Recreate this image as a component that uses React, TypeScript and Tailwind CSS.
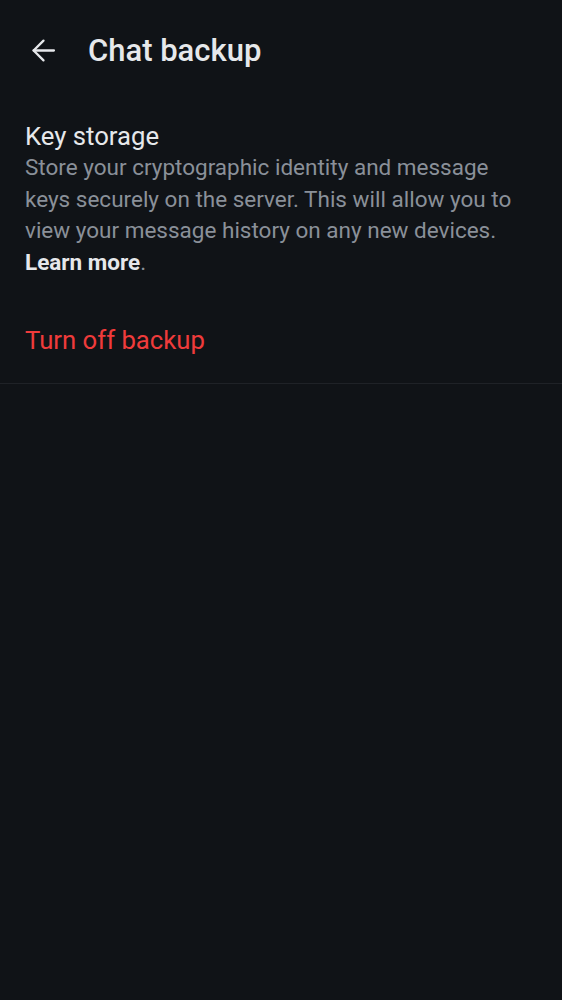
import React from "react";

export default function App() {
  return (
    <div
      className="w-[562px] h-[1000px] bg-[#101317] text-[#e6e8eb] overflow-hidden"
      style={{ fontFamily: "Roboto, 'Noto Sans', sans-serif" }}
    >
      <div className="h-[100px] flex items-center pl-[31px]">
        <svg width="25" height="25" viewBox="0 0 24 24" fill="none" stroke="#e6e8eb" strokeWidth="2.2" strokeLinecap="round" strokeLinejoin="round">
          <path d="M22 12H2.5" />
          <path d="M12 2.5L2.5 12L12 21.5" />
        </svg>
        <h1 className="ml-[32px] text-[31px] font-medium leading-none">Chat backup</h1>
      </div>
      <div className="px-[25px] pt-[20px]">
        <div className="text-[25.7px] leading-[32px] text-[#e6e8eb]">Key storage</div>
        <p className="text-[22.5px] leading-[31.5px] text-[#8a9099]">
          Store your cryptographic identity and message keys securely on the server. This will allow you to view your message history on any new devices.
          <br />
          <span className="font-bold text-[#e6e8eb]">Learn more</span>.
        </p>
      </div>
      <div className="px-[25px] pt-[46px] pb-[27px]">
        <div className="text-[25.7px] leading-[32px] text-[#ef3b3b]">Turn off backup</div>
      </div>
      <div className="h-px bg-[#1f2227]" />
    </div>
  );
}
